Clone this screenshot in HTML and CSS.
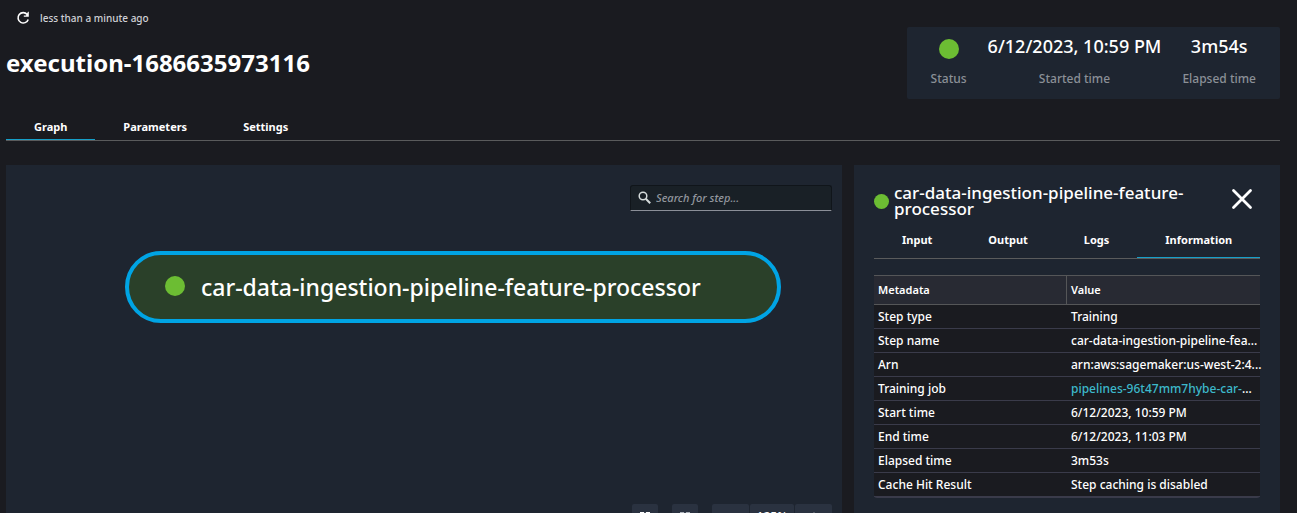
FILE: index.html
```html
<!DOCTYPE html>
<html lang="en">
<head>
    <meta charset="UTF-8">
    <meta name="viewport" content="width=device-width, initial-scale=1.0">
    <title>execution-1686635973116</title>
    <link rel="stylesheet" href="styles.css">
</head>
<body>
    <div class="page">
        <header class="header">
            <div class="heading">
                <div class="refresh">
                    <button type="button" class="icon-button" aria-label="Refresh">
                        <svg width="14" height="14" viewBox="0 0 14 14" fill="none" stroke="#fff" stroke-width="1.6">
                            <path d="M11.2 3.4A5.2 5.2 0 1 0 12.2 8.4" />
                            <path d="M12.8 0.8V5.8H7.8V4.6H10L12 0.8Z" fill="#fff" stroke="none" />
                        </svg>
                    </button>
                    <span>less than a minute ago</span>
                </div>
                <h1>execution-1686635973116</h1>
            </div>
            <dl class="summary">
                <div class="summary-item">
                    <dt>Status</dt>
                    <dd><span class="dot dot-large"></span></dd>
                </div>
                <div class="summary-item">
                    <dt>Started time</dt>
                    <dd>6/12/2023, 10:59 PM</dd>
                </div>
                <div class="summary-item">
                    <dt>Elapsed time</dt>
                    <dd>3m54s</dd>
                </div>
            </dl>
        </header>

        <nav class="tabs" role="tablist">
            <button type="button" class="tab active" role="tab" aria-selected="true">Graph</button>
            <button type="button" class="tab" role="tab">Parameters</button>
            <button type="button" class="tab" role="tab">Settings</button>
        </nav>

        <main class="content">
            <section class="graph">
                <label class="search">
                    <svg width="14" height="14" viewBox="0 0 14 14" fill="none" stroke="#d5dbdb" stroke-width="1.5">
                        <circle cx="5" cy="5" r="3.8" />
                        <path d="M7.8 7.8L12.2 12.2" stroke-width="2" />
                    </svg>
                    <input type="text" placeholder="Search for step..." aria-label="Search for step">
                </label>
                <div class="canvas">
                    <div class="node">
                        <span class="dot dot-large"></span>
                        <span>car-data-ingestion-pipeline-feature-processor</span>
                    </div>
                </div>
                <div class="toolbar">
                    <button type="button" class="tool" aria-label="Fit to screen">
                        <svg width="10" height="10" viewBox="0 0 12 12" fill="none" stroke="#fff" stroke-width="2">
                            <path d="M1 5V1H5M7 1H11V5M11 7V11H7M5 11H1V7" />
                        </svg>
                    </button>
                    <button type="button" class="tool" aria-label="Center graph">
                        <svg width="10" height="10" viewBox="0 0 12 12" fill="none" stroke="#aab0b8" stroke-width="2">
                            <path d="M1 5V1H5M7 1H11V5M11 7V11H7M5 11H1V7" />
                        </svg>
                    </button>
                    <div class="zoom">
                        <button type="button" class="tool" aria-label="Zoom out">
                            <svg width="10" height="10" viewBox="0 0 12 12" stroke="#fff" stroke-width="2">
                                <path d="M1 6H11" />
                            </svg>
                        </button>
                        <button type="button" class="tool zoom-level">125%</button>
                        <button type="button" class="tool" aria-label="Zoom in">
                            <svg width="10" height="10" viewBox="0 0 12 12" stroke="#fff" stroke-width="2">
                                <path d="M1 6H11M6 1V11" />
                            </svg>
                        </button>
                    </div>
                </div>
            </section>

            <aside class="details">
                <div class="details-header">
                    <span class="dot"></span>
                    <h2>car-data-ingestion-pipeline-feature-processor</h2>
                    <button type="button" class="icon-button" aria-label="Close">
                        <svg width="22" height="22" viewBox="0 0 22 22" stroke="#fff" stroke-width="2.8" stroke-linecap="round">
                            <path d="M2.5 2.5L19.5 19.5M19.5 2.5L2.5 19.5" />
                        </svg>
                    </button>
                </div>
                <div class="tabs details-tabs" role="tablist">
                    <button type="button" class="tab" role="tab">Input</button>
                    <button type="button" class="tab" role="tab">Output</button>
                    <button type="button" class="tab" role="tab">Logs</button>
                    <button type="button" class="tab active" role="tab" aria-selected="true">Information</button>
                </div>
                <table class="metadata">
                    <thead>
                        <tr><th>Metadata</th><th>Value</th></tr>
                    </thead>
                    <tbody>
                        <tr><td>Step type</td><td>Training</td></tr>
                        <tr><td>Step name</td><td>car-data-ingestion-pipeline-fea...</td></tr>
                        <tr><td>Arn</td><td>arn:aws:sagemaker:us-west-2:4...</td></tr>
                        <tr><td>Training job</td><td><a href="#">pipelines-96t47mm7hybe-car-</a>...</td></tr>
                        <tr><td>Start time</td><td>6/12/2023, 10:59 PM</td></tr>
                        <tr><td>End time</td><td>6/12/2023, 11:03 PM</td></tr>
                        <tr><td>Elapsed time</td><td>3m53s</td></tr>
                        <tr><td>Cache Hit Result</td><td>Step caching is disabled</td></tr>
                    </tbody>
                </table>
            </aside>
        </main>
    </div>
</body>
</html>
```
FILE: styles.css
```css
* {
    box-sizing: border-box;
}

body {
    margin: 0;
    height: 100vh;
    overflow: hidden;
    background-color: #1a1b20;
    color: #fff;
    font-family: "Noto Sans", "Open Sans", sans-serif;
    font-size: 12px;
    font-weight: 500;
    line-height: 16px;
}

button,
input {
    font: inherit;
    color: inherit;
}

button {
    border: none;
    background: none;
    padding: 0;
    cursor: pointer;
}

h1,
h2,
dl,
dd {
    margin: 0;
}

svg {
    display: block;
}

.page {
    padding: 0 17px 0 6px;
}

.header {
    display: flex;
    justify-content: space-between;
    align-items: flex-start;
    height: 115px;
}

.refresh {
    display: flex;
    align-items: center;
    gap: 10px;
    padding: 10px 10px 0;
    color: #d0d1d6;
    font-size: 10px;
}

h1 {
    margin-top: 21px;
    font-size: 24px;
    font-weight: 700;
    line-height: 32px;
}

.summary {
    display: flex;
    gap: 21px;
    margin-top: 27px;
    padding: 8px 24px 12px;
    background-color: #1e2530;
    border-radius: 2px;
}

.summary-item {
    display: flex;
    flex-direction: column-reverse;
    align-items: center;
    gap: 12px;
}

.summary dt {
    color: #8b9097;
}

.summary dd {
    display: flex;
    align-items: center;
    height: 24px;
    font-size: 18px;
    line-height: 20px;
    padding-bottom: 2px;
}

.summary .dot {
    margin-top: 6px;
}

.dot {
    flex: none;
    width: 15px;
    height: 15px;
    border-radius: 50%;
    background-color: #6cbd33;
}

.dot-large {
    width: 20px;
    height: 20px;
}

.tabs {
    display: flex;
    border-bottom: 1px solid #5a5b5c;
}

.tab {
    height: 25px;
    padding: 0 28px;
    border-bottom: 1px solid transparent;
    font-size: 11px;
    font-weight: 700;
}

.tab.active {
    border-bottom-color: #169fc8;
}

.content {
    display: flex;
    gap: 12px;
    margin-top: 24px;
}

.graph,
.details {
    min-height: 385px;
    padding: 20px;
    background-color: #1e2530;
}

.graph {
    display: flex;
    flex: 1;
    flex-direction: column;
    padding: 20px 10px;
}

.search {
    display: flex;
    align-items: center;
    align-self: flex-end;
    gap: 4px;
    width: 202px;
    height: 26px;
    padding: 0 7px;
    background-color: #192026;
    border: 1px solid #10151a;
    border-bottom-color: #8b8f98;
    border-radius: 3px 3px 0 0;
}

.search input {
    flex: 1;
    min-width: 0;
    padding: 0;
    border: none;
    outline: none;
    background: none;
    font-size: 11px;
}

.search input::placeholder {
    color: #93979e;
    font-style: italic;
}

.canvas {
    position: relative;
    height: 293px;
}

.node {
    position: absolute;
    top: 40px;
    left: 109px;
    display: flex;
    align-items: center;
    gap: 16px;
    width: 656px;
    height: 72px;
    padding: 0 36px;
    background-color: #2a4029;
    border: 4px solid #00a4e4;
    border-radius: 36px;
    font-size: 23px;
}

.node .dot {
    margin-bottom: 3px;
}

.toolbar {
    display: flex;
    justify-content: flex-end;
    gap: 14px;
}

.tool {
    display: flex;
    align-items: center;
    justify-content: center;
    width: 26px;
    height: 26px;
    background-color: #2a3240;
    border-radius: 2px;
}

.zoom {
    display: flex;
    gap: 1px;
}

.zoom .tool {
    width: 37px;
}

.zoom .zoom-level {
    width: 44px;
}

.details {
    width: 426px;
}

.details-header {
    display: flex;
    align-items: center;
    gap: 5px;
    height: 32px;
}

h2 {
    flex: 1;
    font-size: 17px;
    font-weight: 500;
    line-height: 16px;
}

.details-header .icon-button {
    margin: 0 7px 4px 32px;
}

.details-tabs {
    margin-top: 5px;
}

.details-tabs .tab {
    height: 36px;
}

.metadata {
    width: 100%;
    margin-top: 16px;
    table-layout: fixed;
    border-collapse: separate;
    border-spacing: 0;
    border-bottom: 1px solid #3a3b4a;
    border-radius: 3px;
    background-color: #1a1b20;
}

.metadata th,
.metadata td {
    height: 24px;
    padding: 0 0 0 4px;
    text-align: left;
    white-space: nowrap;
}

.metadata td {
    border-bottom: 1px solid #3a3b4a;
}

.metadata th {
    height: 30px;
    background-color: #282a33;
    border-top: 1px solid #555658;
    border-bottom: 1px solid #555658;
    font-size: 11px;
    font-weight: 600;
}

.metadata th:first-child {
    border-right: 1px solid #555658;
}

.metadata a {
    color: #3db9cb;
    text-decoration: none;
}
```
